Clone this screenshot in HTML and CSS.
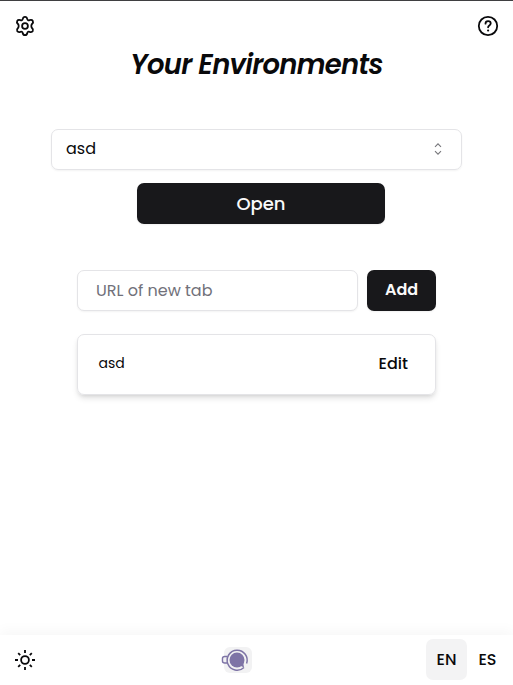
FILE: index.html
```html
<!DOCTYPE html>
<html lang="en">
<head>
<meta charset="utf-8">
<title>Your Environments</title>
<link rel="stylesheet" href="styles.css">
</head>
<body>
<header class="topbar">
  <svg class="icon" viewBox="0 0 22 22" aria-label="Settings"><path d="M8.700 4C9 2.500 9.800 1.800 11 1.800s2 .7 2.300 2.200c.3 1.200 1.100 1.600 2.300 1.200 1.500-.5 2.600-.2 3.200.8.6 1.100.3 2-.8 3-.9.900-.9 3.100 0 4 1.100 1 1.400 1.900.8 3-.6 1-1.700 1.300-3.200.8-1.200-.4-2 0-2.300 1.200-.3 1.500-1.100 2.200-2.300 2.200s-2-.7-2.300-2.200c-.3-1.200-1.100-1.600-2.300-1.200-1.500.5-2.600.2-3.200-.8-.6-1.100-.3-2 .8-3 .9-.9.900-3.100 0-4-1.100-1-1.400-1.900-.8-3 .6-1 1.700-1.300 3.200-.8 1.200.4 2 0 2.300-1.200Z"/><circle cx="11" cy="11" r="2.900"/></svg>
  <svg class="icon" viewBox="0 0 22 22" aria-label="Help"><circle cx="11" cy="11" r="9.200"/><path d="M8.500 8.700c0-1.500 1.100-2.500 2.600-2.500s2.600 1 2.600 2.300c0 1.900-2.600 2-2.600 3.800"/><circle class="dot" cx="11.100" cy="15.500" r="1.100"/></svg>
</header>
<main>
  <h1><span>Your Environments</span></h1>
  <div class="select"><span class="select-text">asd</span><svg class="chevrons" viewBox="0 0 10 14"><path d="M2 4.800 5 1.800l3 3M2 9.200l3 3 3-3"/></svg></div>
  <button class="open"><span>Open</span></button>
  <form class="add-row"><input type="text" placeholder="URL of new tab"><button type="button" class="add"><span>Add</span></button></form>
  <div class="card"><span class="name">asd</span><span class="edit">Edit</span></div>
</main>
<footer>
  <svg class="icon sun" viewBox="0 0 22 22" aria-label="Theme"><circle cx="11" cy="11" r="3.900"/><path d="M11 1v3M11 18v3M1 11h3M18 11h3M4.200 4.200l2 2M15.800 15.800l2 2M4.200 17.800l2-2M15.800 6.200l2-2"/></svg>
  <svg class="logo" viewBox="0 0 32 28"><rect x="4" y="1" width="28" height="26" rx="6"/><path d="M7 10.500H4.800Q2.500 10.500 2.500 12.500v2.500Q2.500 17 4.800 17H7.500"/><path d="M24 21.500A10 10 0 1 1 26.600 17.500"/><circle cx="17" cy="14" r="7.500"/><path class="tip" d="M20 19.500l4 2-1-6Z"/></svg>
  <nav><span class="lang active">EN</span><span class="lang">ES</span></nav>
</footer>
</body>
</html>
```
FILE: styles.css
```css
* { box-sizing: border-box; }
body {
  margin: 0; height: 685px; display: flex; flex-direction: column;
  background: #fff; color: #09090b; border-top: 1px solid #3f3f41;
  font: 16px/24px Poppins, Inter, sans-serif;
  overflow: hidden;
}
button, input { font: inherit; letter-spacing: inherit; }
.topbar { display: flex; justify-content: space-between; padding: 14px 14px 0; height: 41px; }
.icon { width: 22px; height: 22px; flex: none; fill: none; stroke: #09090b; stroke-width: 1.8; stroke-linecap: round; stroke-linejoin: round; }
.icon .dot { fill: #09090b; stroke: none; }
.sun { stroke-linecap: butt; }
main { flex: 1; display: flex; flex-direction: column; align-items: center; }
h1 { margin: 3px 0 0; height: 41px; font-size: 27.5px; line-height: 40px; font-weight: 600; font-style: italic; letter-spacing: -.75px; }
.select {
  width: 411px; height: 41px; margin-top: 43px; padding: 0 18px 2px 14px;
  display: flex; align-items: center; justify-content: space-between;
  border: 1px solid #e4e4e7; border-radius: 7px; box-shadow: 0 1px 2px rgba(0,0,0,.05);
}
.chevrons { width: 10px; height: 14px; fill: none; stroke: #77777b; stroke-width: 1.1; }
.open, .add { border: 0; border-radius: 7px; background: #18181b; color: #fafafa; box-shadow: 0 1px 2px rgba(0,0,0,.06); padding: 0; }
.open { width: 248px; height: 41px; margin: 13px 0 0 9px; font-size: 18px; font-weight: 500; }
.add-row { display: flex; gap: 9px; width: 359px; margin: 46px 0 0; }
input { width: 281px; height: 41px; padding: 0 18px; border: 1px solid #e4e4e7; border-radius: 7px; box-shadow: 0 1px 2px rgba(0,0,0,.05); background: #fff; }
input::placeholder { color: #71717a; opacity: 1; }
.add { width: 69px; height: 41px; font-weight: 600; padding-bottom: 2px; }
.card {
  width: 359px; height: 61px; margin-top: 23px; padding: 0 27px 2px 20.5px;
  display: flex; align-items: center; justify-content: space-between;
  border: 1px solid #e4e4e7; border-radius: 7px;
  box-shadow: 0 4px 6px -1px rgba(0,0,0,.12), 0 2px 4px -2px rgba(0,0,0,.12);
}
.name { font-size: 14px; padding-bottom: 2px; }
.edit { font-weight: 500; }
footer {
  height: 50px; display: grid; grid-template-columns: 206px 1fr auto; align-items: center;
  padding: 0 5px 0 14px; box-shadow: 0 -5px 12px rgba(0,0,0,.03);
}
.logo { width: 32px; height: 28px; fill: none; stroke: #7e74a6; stroke-width: 1.5; }
.logo rect { fill: #f2f2f3; stroke: none; }
.logo circle, .logo .tip { fill: #7e74a6; stroke: none; }
nav { display: flex; padding-bottom: 2px; }
.lang { width: 41px; height: 41px; line-height: 41px; text-align: center; border-radius: 7px; font-weight: 500; }
.active { background: #f3f3f4; }
```
